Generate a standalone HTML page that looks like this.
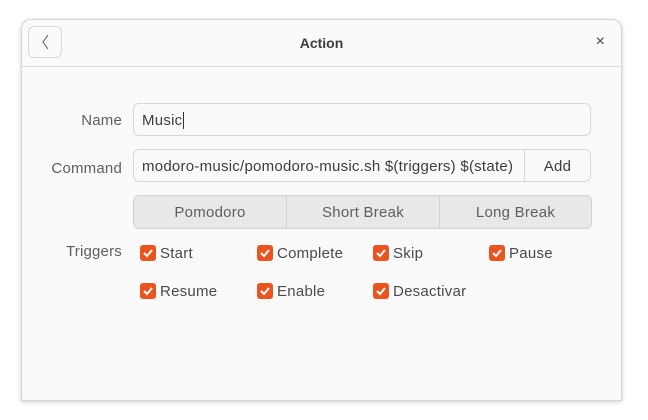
<!DOCTYPE html>
<html><head><style>
body{margin:0;width:648px;height:420px;background:#fff;font-family:"Liberation Sans","DejaVu Sans",sans-serif;position:relative;overflow:hidden}
.win{position:absolute;left:21px;top:19px;width:599px;height:380px;background:#fafafa;border:1px solid #d6d6d6;border-radius:10px 10px 0 0;box-shadow:0 1px 4px rgba(0,0,0,.2)}
.hdr{position:absolute;left:0;top:0;right:0;height:46px;border-bottom:1px solid #dadada}
.back{position:absolute;left:6px;top:6px;width:34px;height:32px;border:1px solid #d8d8d8;border-radius:6px;box-sizing:border-box}
.title{position:absolute;left:0;right:0;top:15px;text-align:center;font-weight:bold;font-size:14px;color:#3d3d3d}
.x{position:absolute;right:16px;top:13px;font-size:16px;color:#444}
.lbl{position:absolute;font-size:15px;letter-spacing:0.2px;color:#5e5e5e;text-align:right;width:100px}
.box{position:absolute;border:1px solid #d6d6d6;border-radius:6px;background:#fafafa;box-sizing:border-box;font-size:15px;letter-spacing:0.25px;color:#3d3d3d}
.seg{position:absolute;top:175px;height:34px;background:#e8e8e8;box-sizing:border-box;border:1px solid #d2d2d2;text-align:center;line-height:34px;font-size:15px;letter-spacing:0.25px;color:#5e5e5e}
.cb{position:absolute;font-size:15px;letter-spacing:0.25px;color:#4a4a4a;line-height:18px}
.cb i{position:absolute;left:-20px;top:0;width:16px;height:16px;background:#e95420;border-radius:3px}
</style></head><body>
<div class="win">
 <div class="hdr">
  <div class="back"><svg width="32" height="30" viewBox="0 0 32 30"><path d="M19 8 L14 15 L19 22" fill="none" stroke="#555" stroke-width="1"/></svg></div>
  <div class="title">Action</div>
  <div class="x">×</div>
 </div>
 <div class="lbl" style="left:0;top:92px">Name</div>
 <div class="box" style="left:111px;top:83px;width:458px;height:33px;padding:8px 8px">Music<span style="border-left:1px solid #333;margin-left:1px"></span></div>
 <div class="lbl" style="left:0;top:140px">Command</div>
 <div class="box" style="left:111px;top:129px;width:458px;height:33px;padding:8px 8px;overflow:hidden;white-space:nowrap">modoro-music/pomodoro-music.sh $(triggers) $(state)
  <div style="position:absolute;left:390px;top:0;bottom:0;right:0;border-left:1px solid #d6d6d6;background:#fafafa;text-align:center;line-height:33px">Add</div></div>
 <div class="seg" style="left:111px;width:154px;border-radius:6px 0 0 6px">Pomodoro</div>
 <div class="seg" style="left:264px;width:154px;border-left:1px solid #d2d2d2">Short Break</div>
 <div class="seg" style="left:417px;width:153px;border-radius:0 6px 6px 0">Long Break</div>
 <div class="lbl" style="left:0;top:223px">Triggers</div>
 <div class="cb" style="left:138px;top:225px"><i><svg width="16" height="16"><path d="M4 8 L7 11 L12 5" fill="none" stroke="#fff" stroke-width="2"/></svg></i>Start</div>
 <div class="cb" style="left:255px;top:225px"><i><svg width="16" height="16"><path d="M4 8 L7 11 L12 5" fill="none" stroke="#fff" stroke-width="2"/></svg></i>Complete</div>
 <div class="cb" style="left:371px;top:225px"><i><svg width="16" height="16"><path d="M4 8 L7 11 L12 5" fill="none" stroke="#fff" stroke-width="2"/></svg></i>Skip</div>
 <div class="cb" style="left:487px;top:225px"><i><svg width="16" height="16"><path d="M4 8 L7 11 L12 5" fill="none" stroke="#fff" stroke-width="2"/></svg></i>Pause</div>
 <div class="cb" style="left:138px;top:263px"><i><svg width="16" height="16"><path d="M4 8 L7 11 L12 5" fill="none" stroke="#fff" stroke-width="2"/></svg></i>Resume</div>
 <div class="cb" style="left:255px;top:263px"><i><svg width="16" height="16"><path d="M4 8 L7 11 L12 5" fill="none" stroke="#fff" stroke-width="2"/></svg></i>Enable</div>
 <div class="cb" style="left:371px;top:263px"><i><svg width="16" height="16"><path d="M4 8 L7 11 L12 5" fill="none" stroke="#fff" stroke-width="2"/></svg></i>Desactivar</div>
</div>
</body></html>
